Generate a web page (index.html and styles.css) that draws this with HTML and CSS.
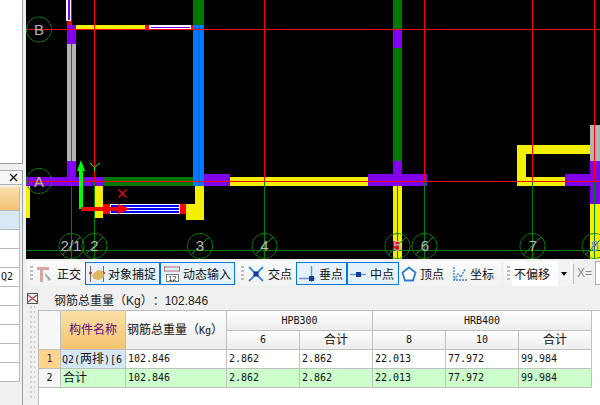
FILE: index.html
```html
<!DOCTYPE html>
<html lang="zh">
<head>
<meta charset="utf-8">
<title>钢筋总重量</title>
<link rel="stylesheet" href="styles.css">
</head>
<body>
<div class="app">
  <aside class="side">
    <div class="side-top"></div>
    <div class="side-head">
      <svg class="close" width="9" height="9" viewBox="0 0 9 9"><path d="M1 1L8 8M8 1L1 8"/></svg>
    </div>
    <div class="side-list">
      <div class="side-row side-row-on"></div>
      <div class="side-row side-row-sel"></div>
      <div class="side-row"></div>
      <div class="side-row"></div>
      <div class="side-row side-row-text">Q2</div>
      <div class="side-row"></div>
      <div class="side-row"></div>
      <div class="side-row"></div>
      <div class="side-row"></div>
      <div class="side-row"></div>
    </div>
  </aside>

  <main class="main">
    <svg class="cad" width="574" height="259" viewBox="26 0 574 259">
      <g class="solid">
        <!-- left column -->
        <rect class="wh" x="66" y="0" width="5" height="21"/>
        <rect class="pu" x="68" y="0" width="2" height="20"/>
        <rect class="re" x="67" y="21" width="4" height="4"/>
        <rect class="pu" x="67" y="25" width="9" height="19"/>
        <rect class="gr" x="67" y="44" width="9" height="117"/>
        <rect class="pu" x="67" y="161" width="9" height="16"/>
        <!-- B beam -->
        <rect class="ye" x="76" y="25" width="69" height="4"/>
        <rect class="re" x="145" y="25" width="4" height="4"/>
        <rect class="wh" x="149" y="25" width="42" height="4"/>
        <rect class="pu" x="151" y="27" width="39" height="1"/>
        <rect class="re" x="191" y="25" width="2" height="4"/>
        <!-- column 3 -->
        <rect class="gn" x="193" y="0" width="11" height="25"/>
        <rect class="bl" x="193" y="25" width="11" height="161"/>
        <rect class="ye" x="195" y="186" width="9" height="34"/>
        <rect class="ye" x="186" y="204" width="9" height="16"/>
        <!-- A beams -->
        <rect class="pu" x="26" y="177" width="77" height="9"/>
        <rect class="gn" x="103" y="177" width="90" height="9"/>
        <rect class="ye" x="26" y="186" width="4" height="32"/>
        <rect class="ye" x="95" y="186" width="8" height="32"/>
        <rect class="pu" x="204" y="174" width="26" height="12"/>
        <rect class="ye" x="230" y="177" width="138" height="9"/>
        <rect class="pu" x="368" y="174" width="59" height="12"/>
        <!-- column 5 -->
        <rect class="gn" x="393" y="0" width="9" height="29"/>
        <rect class="pu" x="393" y="29" width="9" height="19"/>
        <rect class="gn" x="393" y="48" width="9" height="113"/>
        <rect class="pu" x="393" y="161" width="9" height="13"/>
        <rect class="ye" x="393" y="186" width="9" height="73"/>
        <!-- bracket -->
        <rect class="ye" x="517" y="145" width="73" height="9"/>
        <rect class="ye" x="517" y="154" width="9" height="32"/>
        <rect class="ye" x="526" y="177" width="39" height="9"/>
        <rect class="pu" x="565" y="174" width="25" height="12"/>
        <rect class="gr" x="590" y="125" width="10" height="36"/>
        <rect class="pu" x="590" y="161" width="10" height="43"/>
        <rect class="ye" x="590" y="204" width="10" height="55"/>
        <!-- lower beam -->
        <rect class="re" x="103" y="204" width="7" height="10"/>
        <rect class="wh" x="110" y="204" width="70" height="10"/>
        <rect class="bk" x="111" y="205" width="68" height="2"/>
        <rect class="bk" x="111" y="208" width="68" height="2"/>
        <rect class="bk" x="111" y="211" width="68" height="2"/>
        <rect class="re" x="180" y="204" width="6" height="10"/>
        <rect class="re" x="393" y="241" width="6" height="9"/>
        <!-- green axes -->
        <rect class="ax" x="71" y="181" width="1" height="78"/>
        <rect class="ax" x="94" y="181" width="1" height="78"/>
        <rect class="ax" x="264" y="181" width="1" height="78"/>
        <rect class="ax" x="397" y="181" width="1" height="78"/>
        <rect class="ax" x="424" y="181" width="1" height="78"/>
        <rect class="ax" x="532" y="181" width="1" height="78"/>
        <rect class="ax" x="594" y="181" width="1" height="78"/>
        <rect class="ax" x="26" y="250" width="574" height="1"/>
        <!-- red axes -->
        <rect class="re" x="71" y="0" width="1" height="181"/>
        <rect class="re" x="94" y="0" width="1" height="181"/>
        <rect class="re" x="199" y="0" width="1" height="186"/>
        <rect class="re" x="264" y="0" width="1" height="181"/>
        <rect class="re" x="397" y="0" width="1" height="181"/>
        <rect class="re" x="424" y="0" width="1" height="181"/>
        <rect class="re" x="532" y="0" width="1" height="181"/>
        <rect class="re" x="594" y="0" width="1" height="181"/>
        <rect class="re" x="26" y="29" width="574" height="1"/>
        <rect class="re" x="26" y="181" width="574" height="1"/>
      </g>
      <g class="bubbles">
        <circle cx="39" cy="29.5" r="12.5"/>
        <circle cx="39" cy="181" r="12.5"/>
        <circle cx="71.5" cy="246" r="12.5"/>
        <circle cx="94.5" cy="246" r="12.5"/>
        <circle cx="200" cy="246" r="12.5"/>
        <circle cx="264.5" cy="246" r="12.5"/>
        <circle cx="397.5" cy="246" r="12.5"/>
        <circle cx="424.5" cy="246" r="12.5"/>
        <circle cx="532.5" cy="246" r="12.5"/>
        <circle cx="594.5" cy="246" r="12.5"/>
        <path d="M62 255L80 237M85 255L103 237M191 255L209 237M255 255L273 237M388 255L406 237M415 255L433 237M523 255L541 237M585 255L600 240"/>
      </g>
      <g class="labels">
        <text x="39" y="35">B</text>
        <text class="lab-a" x="39" y="187">A</text>
        <text x="71" y="251">2/1</text>
        <text x="94.5" y="251">2</text>
        <text x="200" y="251">3</text>
        <text x="264.5" y="251">4</text>
        <text x="397.5" y="251">5</text>
        <text x="425" y="251">6</text>
        <text x="533" y="251">7</text>
        <text class="lab-8" x="595" y="251">8</text>
      </g>
      <g class="ucs">
        <path class="ucs-y" d="M79 209V171H77L81 160L85 171H83V209Z"/>
        <path class="ucs-x" d="M81 207H118V204L130 209L118 214V211H81Z"/>
        <path class="mark-y" d="M90 163L94.5 167.500L100 163M94.500 167.500V171"/>
        <path class="mark-x" d="M118.500 189.500L126.500 197.500M126.500 189.500L118.500 197.500"/>
      </g>
    </svg>

    <div class="toolbar">
      <div class="tgroup tgroup-a">
        <span class="grip"></span>
        <div class="tool tool-plain">
          <svg width="16" height="16" viewBox="0 0 16 16"><path class="i-pink" d="M0 1H12V4H6V16H3V4H0Z"/><path class="i-cur" d="M8 7L14 13L12 15L8 9Z"/></svg>
          <span>正交</span>
        </div>
        <div class="tool tool-on tool-snap">
          <svg width="16" height="16" viewBox="0 0 16 16"><path class="i-brown" d="M1.500 0V16M14.500 0V16"/><circle class="i-dot" cx="1.500" cy="7" r="1.500"/><circle class="i-dot" cx="14.500" cy="7" r="1.500"/><path class="i-gold" d="M5 7L9 4L14 5L15 11L10 14L5 13L3 10Z"/></svg>
          <span>对象捕捉</span>
        </div>
        <div class="tool tool-on tool-snap">
          <svg width="16" height="16" viewBox="0 0 16 16"><path class="i-pinkline" d="M0.500 1H15.500M0.500 0V5M15.500 0V5M0 5H16"/><rect class="i-box" x="2.500" y="8.500" width="12" height="7"/><text class="i-num" x="8.500" y="14.500">12</text></svg>
          <span>动态输入</span>
        </div>
      </div>
      <div class="tgroup tgroup-b">
        <span class="grip"></span>
        <div class="tool tool-plain tool-cross">
          <svg width="16" height="16" viewBox="0 0 16 16"><path class="i-blue" d="M1 1L15 15M15 1L1 15"/><rect class="i-navy" x="5.500" y="5.500" width="5" height="5"/></svg>
          <span>交点</span>
        </div>
        <div class="tool tool-on tool-foot">
          <svg width="16" height="16" viewBox="0 0 16 16"><path class="i-line" d="M0 12.500H16M12.500 0V16"/><rect class="i-navy" x="10" y="10" width="5" height="5"/></svg>
          <span>垂点</span>
        </div>
        <div class="tool tool-on tool-mid">
          <svg width="16" height="16" viewBox="0 0 16 16"><path class="i-line" d="M0 8.500H16"/><rect class="i-navy" x="6" y="6" width="5" height="5"/></svg>
          <span>中点</span>
        </div>
        <div class="tool tool-plain tool-vertex">
          <svg width="16" height="16" viewBox="0 0 16 16"><path class="i-penta" d="M8 1.500L14.500 6.500L12 14.500H4L1.500 6.500Z"/></svg>
          <span>顶点</span>
        </div>
        <div class="tool tool-plain tool-coord">
          <svg width="16" height="16" viewBox="0 0 16 16"><path class="i-axis" d="M3 1V14H16M3 14L7 8L10 11L14 3"/></svg>
          <span>坐标</span>
        </div>
      </div>
      <div class="tgroup tgroup-c">
        <span class="grip"></span>
        <div class="combo">
          <span class="combo-text">不偏移</span>
          <span class="combo-btn"><span class="caret"></span></span>
        </div>
      </div>
      <span class="sep"></span>
      <span class="xlabel">X=</span>
      <span class="xinput"></span>
    </div>

    <div class="lower">
      <div class="gutter">
        <svg class="pin" width="11" height="11" viewBox="0 0 11 11"><rect class="pin-box" x="0.500" y="0.500" width="10" height="10"/><path class="pin-x" d="M1 2L10 9M10 2L1 9"/></svg>
        <svg class="dots" width="12" height="95"><defs><pattern id="dotgrid" width="4" height="5" patternUnits="userSpaceOnUse"><rect class="dot" x="0" y="0" width="2" height="2"/></pattern></defs><rect x="2" y="0" width="7" height="95" fill="url(#dotgrid)"/></svg>
      </div>
      <div class="report">
        <div class="report-title">钢筋总重量（Kg）：102.846</div>
        <div class="sheet">
          <table class="grid">
            <colgroup>
              <col class="c-no"><col class="c-name"><col class="c-total">
              <col class="c-n"><col class="c-n"><col class="c-n"><col class="c-n"><col class="c-n">
            </colgroup>
            <thead>
              <tr class="r-h1">
                <th rowspan="2" class="corner"></th>
                <th rowspan="2" class="th-name"><span class="cjk">构件名称</span></th>
                <th rowspan="2" class="th-total"><span class="cjk">钢筋总重量（</span>Kg<span class="cjk">）</span></th>
                <th colspan="2">HPB300</th>
                <th colspan="3">HRB400</th>
              </tr>
              <tr class="r-h2">
                <th>6</th>
                <th><span class="cjk">合计</span></th>
                <th>8</th>
                <th>10</th>
                <th><span class="cjk">合计</span></th>
              </tr>
            </thead>
            <tbody>
              <tr>
                <th class="no no-sel">1</th>
                <td class="name-sel">Q2(<span class="cjk">两排</span>)[6</td>
                <td>102.846</td><td>2.862</td><td>2.862</td><td>22.013</td><td>77.972</td><td>99.984</td>
              </tr>
              <tr class="sum">
                <th class="no">2</th>
                <td><span class="cjk">合计</span></td>
                <td>102.846</td><td>2.862</td><td>2.862</td><td>22.013</td><td>77.972</td><td>99.984</td>
              </tr>
            </tbody>
          </table>
        </div>
      </div>
    </div>
  </main>
</div>
</body>
</html>
```

FILE: styles.css
```css
* { box-sizing: border-box; }
html, body { margin: 0; padding: 0; background: #f0f0f0; }
body { font-family: "Liberation Sans", "Noto Sans CJK SC", sans-serif; font-size: 12px; color: #111; text-spacing-trim: space-all; }

.app { display: grid; grid-template-columns: 26px 574px; width: 600px; height: 405px; overflow: hidden; }

/* left side panel */
.side { display: flex; flex-direction: column; height: 405px; width: 26px; padding-right: 3px; background: #f0f0f0; }
.side > * { border-right: 1px solid #9a9a9a; }
.side-top { height: 164px; flex: none; background: #fff; border-bottom: 1px solid #9a9a9a; }
.side-head { margin-top: 6px; height: 15px; flex: none; display: flex; align-items: center; justify-content: flex-end; padding-right: 4px; background: #f6f6f6; border-top: 1px solid #b0b0b0; border-bottom: 1px solid #b0b0b0; }
.close path { stroke: #000; stroke-width: 1.100; fill: none; }
.side-list { flex: 1; padding: 2px 2px 0 0; display: flex; flex-direction: column; min-height: 0; }
.side-row { flex: none; height: 19px; width: 20px; background: #fff; border-right: 1px solid #b9b9b9; border-bottom: 1px solid #b9b9b9; font-family: "DejaVu Sans Mono", monospace; font-size: 10px; line-height: 18px; }
.side-row-on { height: 24px; background: linear-gradient(#f9dfac, #f3c271); }
.side-row-sel { background: #d9e8f7; }
.side-row-text { padding-left: 1px; }

/* drawing */
.main { display: flex; flex-direction: column; min-width: 0; }
.cad { display: block; flex: none; background: #000; }
.solid rect { shape-rendering: crispEdges; }
.wh { fill: #fff; }
.pu { fill: #8000f0; }
.re { fill: #ff0000; }
.gr { fill: #b4b4b4; }
.ye { fill: #f2f000; }
.gn { fill: #007800; }
.bl { fill: #0078ff; }
.bk { fill: #0000ff; }
.ax { fill: #008000; }
.bubbles circle { fill: none; stroke: #0a8a0a; stroke-width: 1; stroke-dasharray: 4 .5; }
.bubbles path { fill: none; stroke: #0a8a0a; stroke-width: 1; }
.labels text { font-family: "Liberation Sans", sans-serif; font-size: 15px; fill: #b8b8b8; text-anchor: middle; }
.labels .lab-a { fill: #a8c850; }
.labels .lab-8 { fill: #7f7fe0; }
.ucs-y { fill: #00ff00; }
.ucs-x { fill: #ff0000; }
.mark-y { fill: none; stroke: #00ff00; stroke-width: 1; }
.mark-x { fill: none; stroke: #ff0000; stroke-width: 1.200; }

/* toolbar */
.toolbar { flex: none; height: 27px; display: flex; align-items: flex-start; padding: 2px 0 0 1px; background: #f0f0f0; }
.tgroup { height: 25px; display: flex; align-items: center; flex: none; background: linear-gradient(#fafafa, #f2f2f2); border-radius: 3px; }
.tgroup-a { width: 211px; padding-left: 3px; }
.tgroup-b { width: 263px; padding-left: 3px; }
.tgroup-c { width: 69px; padding-left: 3px; margin-left: 3px; }
.grip { width: 3px; height: 16px; flex: none; background: repeating-linear-gradient(#bdbdbd 0 2px, transparent 2px 4px); }
.tool { display: flex; align-items: center; flex: none; height: 23px; line-height: 16px; font-size: 12px; font-family: "Noto Sans CJK SC", sans-serif; }
.tool svg { flex: none; display: block; }
.tool-plain { gap: 4px; margin-left: 4px; }
.tool-on { border: 1px solid #0078d7; background: #e5f1fb; gap: 3px; padding-left: 3px; }
.tool-snap { width: 75px; }
.tool-plain + .tool-snap { margin-left: 4px; }
.tool-cross { margin-left: 4px; gap: 4px; }
.tool-foot { width: 51px; margin-left: 4px; padding-left: 2px; gap: 4px; }
.tool-mid { width: 52px; padding-left: 2px; gap: 4px; }
.tool-vertex { margin-left: 2px; gap: 3px; }
.tool-coord { margin-left: 7px; gap: 3px; }
.combo { display: flex; align-items: center; justify-content: space-between; width: 58px; height: 25px; margin-left: 2px; background: #fff; }
.combo-text { padding-left: 2px; font-family: "Noto Sans CJK SC", sans-serif; font-size: 12px; }
.combo-btn { width: 12px; height: 100%; display: flex; align-items: center; justify-content: center; background: #f2f2f2; }
.caret { border-left: 3px solid transparent; border-right: 3px solid transparent; border-top: 4px solid #111; }
.sep { width: 1px; height: 20px; margin: 3px 0 0 0; background: #bbb; flex: none; }
.xlabel { margin: 4px 0 0 3px; width: 18px; flex: none; color: #8a8a8a; font-size: 12px; line-height: 16px; }
.xinput { width: 8px; height: 24px; flex: none; background: #fff; border: 1px solid #aaa; }

/* lower panel */
.lower { flex: 1; display: grid; grid-template-columns: 12px 562px; min-height: 0; }
.gutter { display: flex; flex-direction: column; padding-left: 1px; }
.pin { display: block; margin-top: 7px; flex: none; }
.pin-box { fill: #eee; stroke: #555; }
.pin-x { stroke: #b05050; fill: none; stroke-width: 1.300; }
.dots { display: block; margin: 2px 0 0 -1px; flex: none; }
.dot { fill: #cdcdcd; }
.report { display: flex; flex-direction: column; min-height: 0; }
.report-title { flex: none; height: 24px; padding: 6px 0 0 16px; line-height: 18px; color: #222; white-space: nowrap; }
.sheet { flex: 1; background: #fff; border-top: 1px solid #bdbdbd; border-left: 1px solid #bdbdbd; }
.grid { table-layout: fixed; border-collapse: separate; border-spacing: 0; width: 553px; font-family: "DejaVu Sans Mono", "Liberation Mono", monospace; font-size: 10px; }
.c-no { width: 22px; }
.c-name { width: 65px; }
.c-total { width: 101px; }
.c-n { width: 73px; }
.grid th, .grid td { padding: 0; border-right: 1px solid #c0c0c0; border-bottom: 1px solid #c0c0c0; white-space: nowrap; overflow: hidden; color: #111; font-weight: 400; line-height: 14px; }
.grid td { padding-left: 2px; background: #fff; }
.grid thead th { background: linear-gradient(#fdfdfd, #ededed); text-align: center; }
.r-h1 { height: 20px; }
.r-h2 { height: 19px; }
tbody tr { height: 19px; }
.cjk { font-family: "Noto Sans CJK SC", sans-serif; font-size: 12px; }
.grid thead .corner { background: #f7f7f7; }
.grid thead .th-name { background: linear-gradient(#fadfa8, #f4c36f); color: #5e0a80; }
.grid thead .th-total { text-align: left; padding-left: 1px; }
.grid tbody .no { text-align: center; background: #f6f6f6; }
.grid tbody .no-sel { background: #ffd58c; color: #5e0a80; }
.grid tbody .name-sel { background: #d6e8f8; padding-left: 1px; }
.grid .sum td { background: #ccffcc; }

/* toolbar glyphs */
.i-pink { fill: #d8a4a4; }
.i-cur { fill: #9aa8b8; }
.i-brown { stroke: #9a5a5a; stroke-width: 1; fill: none; }
.i-dot { fill: #c03030; }
.i-gold { fill: #dcb860; }
.i-pinkline { stroke: #b07070; stroke-width: 1; fill: none; }
.i-box { fill: #fff; stroke: #777; }
.i-num { font-family: "Liberation Sans", sans-serif; font-size: 7px; text-anchor: middle; fill: #111; }
.i-blue { stroke: #2f86dc; stroke-width: 1.800; fill: none; }
.i-navy { fill: #123c96; }
.i-line { stroke: #6f94c8; stroke-width: 1.400; fill: none; }
.i-penta { fill: #fff; stroke: #2b7cd3; stroke-width: 1.800; }
.i-axis { fill: none; stroke: #2b7cd3; stroke-width: 1.300; stroke-dasharray: 2 1; }
```
